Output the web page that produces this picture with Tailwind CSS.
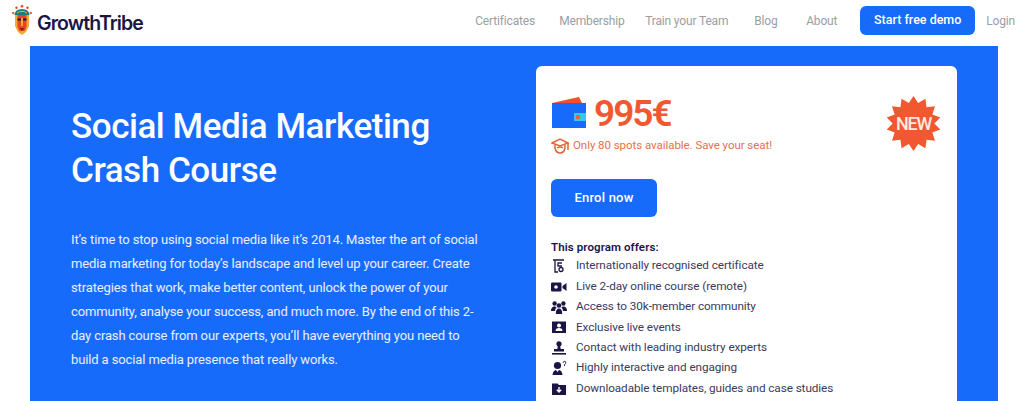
<!DOCTYPE html>
<html><head><meta charset="utf-8"><script src="https://cdn.jsdelivr.net/npm/@tailwindcss/browser@4"></script></head>
<body class="bg-white overflow-hidden font-['Roboto',sans-serif]">
<div class="h-[401px] overflow-hidden">
<header class="h-[46px] flex items-start justify-between pl-[12px] pr-[9px]">
  <div class="flex items-start gap-[5px] pt-[5px]">
    <svg width="20" height="30" viewBox="0 0 20 30">
      <circle cx="10" cy="1.3" r="1.3" fill="#d9482b"/><circle cx="4.5" cy="2.8" r="1.2" fill="#d9482b"/><circle cx="15.5" cy="2.8" r="1.2" fill="#d9482b"/><circle cx="1.2" cy="8" r="1.2" fill="#e9602e"/><circle cx="18.8" cy="8" r="1.2" fill="#e9602e"/>
      <path d="M2.5 10 Q3 4 10 4 Q17 4 17.5 10 Z" fill="#1c7c86"/>
      <path d="M5 8 Q10 4.5 15 8" fill="none" stroke="#f5b02e" stroke-width="1"/>
      <path d="M3 10 H17 L17 21 L14 27 L10 30 L6 27 L3 21 Z" fill="#f5a92e"/>
      <path d="M5.5 10 H14.5 L14.5 22 L12.5 26 H7.5 L5.5 22 Z" fill="#e5432a"/>
      <path d="M5.5 13.5 H9 V15.5 H5.5 Z M11 13.5 H14.5 V15.5 H11 Z" fill="#1b1546"/>
      <path d="M9 13 H11 V21 H9 Z" fill="#f5a92e"/>
      <path d="M7.5 23 H12.5 L10 26 Z" fill="#8c1f16"/>
    </svg>
    <span class="font-['Inter',sans-serif] text-[#1b1546] text-[19.5px] font-semibold tracking-[-0.9px] leading-none mt-[9px]">GrowthTribe</span>
  </div>
  <nav class="flex items-center h-[29px] mt-[6px] text-[12px] text-[#9a9ea3] tracking-[-0.15px]">
    <a class="w-[84px]">Certificates</a>
    <a class="w-[86px]">Membership</a>
    <a class="w-[109px]">Train your Team</a>
    <a class="w-[52px]">Blog</a>
    <a class="w-[54px]">About</a>
    <a class="w-[115px] h-[29px] flex items-center justify-center rounded-[6px] bg-[#176bfb] text-white text-[12.5px] font-medium tracking-normal mr-[11px]">Start free demo</a>
    <a>Login</a>
  </nav>
</header>
<main class="mx-[30px] w-[968px] h-[355px] bg-[#176bfb] flex">
  <section class="w-[506px] pl-[41px] pr-[20px] pt-[59px] text-white">
    <h1 class="text-[35px] leading-[44px] font-medium tracking-[-0.45px]">Social Media Marketing<br>Crash Course</h1>
    <p class="mt-[35px] text-[13px] leading-[24px] tracking-[-0.12px] text-white/90 whitespace-nowrap">It’s time to stop using social media like it’s 2014. Master the art of social<br>media marketing for today’s landscape and level up your career. Create<br>strategies that work, make better content, unlock the power of your<br>community, analyse your success, and much more. By the end of this 2-<br>day crash course from our experts, you’ll have everything you need to<br>build a social media presence that really works.</p>
  </section>
  <section class="relative mt-[20px] w-[421px] h-[340px] bg-white rounded-t-[6px] pl-[16px] pt-[31px]">
    <div class="flex items-start gap-[7px] h-[34px]">
      <svg width="35" height="31" viewBox="0 0 35 31"><path d="M0 6 L27 0 L30 6 Z" fill="#f0502c"/><rect x="0" y="6" width="34" height="25" fill="#176bfb"/><rect x="22" y="16" width="12" height="8" fill="#35c8f5"/><circle cx="26" cy="20" r="2.3" fill="#e5633a"/></svg>
      <span class="text-[37px] leading-[34px] font-semibold text-[#f1582f] tracking-[-2px]">995€</span>
    </div>
    <div class="flex items-center gap-[3px] -ml-[1px] mt-[5px] text-[11.5px] text-[#e5704e] tracking-[-0.05px] h-[20px]">
      <svg width="19" height="17" viewBox="0 0 19 17" fill="none" stroke="#e5633a" stroke-width="1.5"><path d="M1 5 L9 1 L17 5 L9 8 Z"/><path d="M4 7 V10 Q5 15 9 15 Q13 15 14 10 V7"/><path d="M17 5 V12"/><path d="M6 10 Q9 8 12 10"/></svg>
      <span>Only 80 spots available. Save your seat!</span>
    </div>
    <a class="mt-[23px] -ml-[1px] w-[106px] h-[38px] flex items-center justify-center rounded-[6px] bg-[#176bfb] text-white text-[13px] font-medium tracking-[0.2px]">Enrol now</a>
    <p class="-ml-[1px] mt-[21px] text-[11.5px] leading-[18px] font-semibold text-[#1b1546] tracking-[0.1px]">This program offers:</p>
    <ul class="-ml-[1px] text-[11.75px] text-[#3b3a5c] tracking-[-0.08px]">
      <li class="flex items-center h-[20.4px]"><span class="w-[25px] flex"><svg width="16" height="16" viewBox="0 0 16 16" fill="none" stroke="#1b1546" stroke-width="1.3"><path d="M2 2 H13 M4 2 V14 H7 M11 5 H7 V8 H11"/><circle cx="10" cy="11.5" r="2"/></svg></span>Internationally recognised certificate</li>
      <li class="flex items-center h-[20.4px]"><span class="w-[25px] flex"><svg width="16" height="16" viewBox="0 0 16 16" fill="#1b1546"><rect x="0" y="3.5" width="10.5" height="9" rx="1"/><path d="M11.5 7 L15.5 4 V12 L11.5 9 Z"/><circle cx="5" cy="8" r="1.8" fill="#fff"/></svg></span>Live 2-day online course (remote)</li>
      <li class="flex items-center h-[20.4px]"><span class="w-[25px] flex"><svg width="16" height="16" viewBox="0 0 16 16" fill="#1b1546"><circle cx="3.6" cy="4.5" r="2.2"/><circle cx="12.4" cy="4.5" r="2.2"/><circle cx="8" cy="6.5" r="2.3"/><path d="M0 12 Q0 7.5 3.6 7.5 Q5 7.5 5.6 8.6 Q4 10 4 12 Z M12 12 Q12 10 10.4 8.6 Q11 7.5 12.4 7.5 Q16 7.5 16 12 Z M4.8 15 Q4.8 9.5 8 9.5 Q11.2 9.5 11.2 15 Z"/></svg></span>Access to 30k-member community</li>
      <li class="flex items-center h-[20.4px]"><span class="w-[25px] flex"><svg width="16" height="16" viewBox="0 0 16 16" fill="#1b1546"><path fill-rule="evenodd" d="M1 2.5 H15 V14 H1 Z M8 4.5 a2 2 0 1 0 .01 0 Z M4.5 12 H11.5 Q11.5 9 8 9 Q4.5 9 4.5 12 Z"/></svg></span>Exclusive live events</li>
      <li class="flex items-center h-[20.4px]"><span class="w-[25px] flex"><svg width="16" height="16" viewBox="0 0 16 16" fill="#1b1546"><circle cx="8" cy="3.8" r="2.6"/><path d="M6.8 6 H9.2 L9.7 9 H13 V11.5 H3 V9 H6.3 Z"/><rect x="1" y="13" width="14" height="1.6"/></svg></span>Contact with leading industry experts</li>
      <li class="flex items-center h-[20.4px]"><span class="w-[25px] flex"><svg width="16" height="16" viewBox="0 0 16 16" fill="#1b1546"><circle cx="6.5" cy="5.5" r="3.6"/><path d="M1.5 15 Q2 10.5 5 10 L6.5 12 L8 10 Q11 10.5 11.5 15 Z"/><path d="M12 3 Q12.5 1 14 1.3 Q15.5 1.8 14.5 3.5 L13.5 4.8 V6" fill="none" stroke="#1b1546" stroke-width="0.9"/></svg></span>Highly interactive and engaging</li>
      <li class="flex items-center h-[20.4px]"><span class="w-[25px] flex"><svg width="16" height="16" viewBox="0 0 16 16"><path d="M1 2.5 H6.5 L8 4 H15 V14 H1 Z" fill="#1b1546"/><path d="M8 6 V10.5 M5.8 8.8 L8 11 L10.2 8.8" fill="none" stroke="#fff" stroke-width="1.4"/></svg></span>Downloadable templates, guides and case studies</li>
    </ul>
    <div class="absolute left-[350px] top-[30px] w-[55px] h-[55px] flex items-center justify-center">
      <svg class="absolute inset-0" width="55" height="55" viewBox="0 0 100 100"><polygon fill="#f1582f" points="50,0 58.5,12.9 71.7,5 73.7,20.3 89.1,18.8 84.2,33.5 98.7,38.9 88,50 98.7,61.1 84.2,66.5 89.1,81.2 73.7,79.7 71.7,95 58.5,87.1 50,100 41.5,87.1 28.3,95 26.3,79.7 10.9,81.2 15.8,66.5 1.3,61.1 12,50 1.3,38.9 15.8,33.5 10.9,18.8 26.3,20.3 28.3,5 41.5,12.9"/></svg>
      <span class="relative text-[#fbe9e3] text-[18px] font-medium tracking-[-1.2px]">NEW</span>
    </div>
  </section>
</main>
</div>
</body></html>
